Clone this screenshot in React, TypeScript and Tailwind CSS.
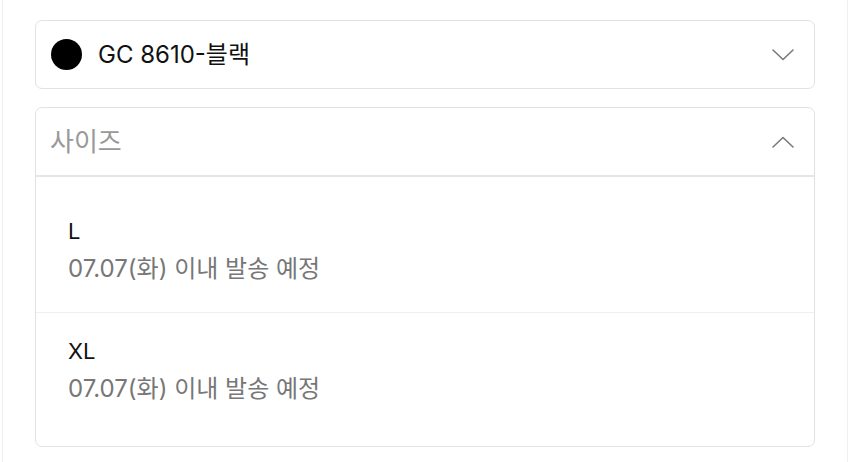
import { useState } from "react";

const FONT = { fontFamily: 'Inter, "Noto Sans CJK KR", "Noto Sans", sans-serif' };

const SIZES = [
  { name: "L", note: "07.07(화) 이내 발송 예정" },
  { name: "XL", note: "07.07(화) 이내 발송 예정" },
];

function Chevron({ up }: { up?: boolean }) {
  return (
    <svg width="22" height="12" viewBox="0 0 22 12" fill="none" className="shrink-0">
      <path
        d={up ? "M1 11 L11 1.5 L21 11" : "M1 1 L11 10.5 L21 1"}
        stroke="#7a7a7a"
        strokeWidth="1.6"
        strokeLinecap="round"
        strokeLinejoin="round"
      />
    </svg>
  );
}

export default function App() {
  const [open] = useState(true);
  return (
    <div className="w-[850px] h-[462px] bg-white" style={FONT}>
      <div className="mx-[2px] h-full border-x border-[#efefef] px-[32px] pt-[20px]">
        {/* color select */}
        <div className="h-[69px] rounded-[7px] border border-[#e2e2e2] flex items-center pl-[15px] pr-[20px]">
          <span className="w-[31px] h-[31px] rounded-full bg-black shrink-0" />
          <span className="ml-[16px] flex-1 text-[24px] text-[#111]">GC 8610-블랙</span>
          <Chevron />
        </div>

        {/* size select */}
        <div className="mt-[18px] h-[340px] rounded-[7px] border border-[#e2e2e2] flex flex-col">
          <div className="h-[69px] shrink-0 flex items-center pl-[14px] pr-[20px] border-b-2 border-[#e6e6e6]">
            <span className="flex-1 text-[26px] text-[#999]">사이즈</span>
            <Chevron up={open} />
          </div>
          {SIZES.map((s, i) => (
            <div
              key={s.name}
              className={`pl-[32px] ${i === 0 ? "pt-[40px] h-[136px] border-b border-[#f0f0f0]" : "pt-[24px] flex-1"}`}
            >
              <div className="text-[22px] leading-[28px] text-[#111]">{s.name}</div>
              <div className="mt-[10px] text-[24px] leading-[28px] text-[#777]">{s.note}</div>
            </div>
          ))}
        </div>
      </div>
    </div>
  );
}
